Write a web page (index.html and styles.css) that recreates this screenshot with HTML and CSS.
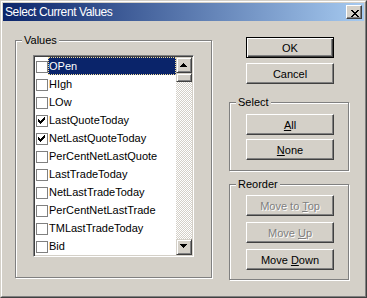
FILE: index.html
```html
<!DOCTYPE html>
<html lang="en">
<head>
    <meta charset="UTF-8">
    <title>Select Current Values</title>
    <link rel="stylesheet" href="styles.css">
</head>
<body>
    <div class="window">
        <div class="frame">
            <div class="titlebar">
                <span class="title">Select Current Values</span>
                <button class="close-btn" type="button">
                    <svg width="8" height="7" viewBox="0 0 8 7" shape-rendering="crispEdges">
                        <path d="M0 0h2v1h-2zM6 0h2v1h-2zM1 1h2v1h-2zM5 1h2v1h-2zM2 2h4v1h-4zM3 3h2v1h-2zM2 4h4v1h-4zM1 5h2v1h-2zM5 5h2v1h-2zM0 6h2v1h-2zM6 6h2v1h-2z" fill="#000"/>
                    </svg>
                </button>
            </div>

            <div class="dialog-body">
                <fieldset class="group values-group">
                    <legend>Values</legend>
                    <div class="listbox">
                        <ul class="items">
                            <li class="item selected"><span class="check"></span><span class="label">OPen</span></li>
                            <li class="item"><span class="check"></span><span class="label">HIgh</span></li>
                            <li class="item"><span class="check"></span><span class="label">LOw</span></li>
                            <li class="item"><span class="check checked"><svg width="10" height="10" viewBox="0 0 10 10" shape-rendering="crispEdges"><path d="M7 1h1v1h-1zM6 2h2v1h-2zM1 3h1v1h-1zM5 3h3v1h-3zM1 4h2v1h-2zM4 4h3v1h-3zM1 5h5v1h-5zM2 6h3v1h-3zM3 7h1v1h-1z" fill="#000"/></svg></span><span class="label">LastQuoteToday</span></li>
                            <li class="item"><span class="check checked"><svg width="10" height="10" viewBox="0 0 10 10" shape-rendering="crispEdges"><path d="M7 1h1v1h-1zM6 2h2v1h-2zM1 3h1v1h-1zM5 3h3v1h-3zM1 4h2v1h-2zM4 4h3v1h-3zM1 5h5v1h-5zM2 6h3v1h-3zM3 7h1v1h-1z" fill="#000"/></svg></span><span class="label">NetLastQuoteToday</span></li>
                            <li class="item"><span class="check"></span><span class="label">PerCentNetLastQuote</span></li>
                            <li class="item"><span class="check"></span><span class="label">LastTradeToday</span></li>
                            <li class="item"><span class="check"></span><span class="label">NetLastTradeToday</span></li>
                            <li class="item"><span class="check"></span><span class="label">PerCentNetLastTrade</span></li>
                            <li class="item"><span class="check"></span><span class="label">TMLastTradeToday</span></li>
                            <li class="item"><span class="check"></span><span class="label">Bid</span></li>
                        </ul>
                        <div class="scrollbar">
                            <div class="sb-btn sb-up">
                                <svg width="7" height="4" viewBox="0 0 7 4" shape-rendering="crispEdges"><path d="M3 0h1v1h-1zM2 1h3v1h-3zM1 2h5v1h-5zM0 3h7v1h-7z" fill="#000"/></svg>
                            </div>
                            <div class="sb-track">
                                <div class="sb-thumb"></div>
                            </div>
                            <div class="sb-btn sb-down">
                                <svg width="7" height="4" viewBox="0 0 7 4" shape-rendering="crispEdges"><path d="M0 0h7v1h-7zM1 1h5v1h-5zM2 2h3v1h-3zM3 3h1v1h-1z" fill="#000"/></svg>
                            </div>
                        </div>
                    </div>
                </fieldset>

                <div class="side">
                    <button class="btn default-btn" type="button">OK</button>
                    <button class="btn cancel-btn" type="button">Cancel</button>

                    <fieldset class="group select-group">
                        <legend>Select</legend>
                        <button class="btn" type="button"><u>A</u>ll</button>
                        <button class="btn gap4" type="button"><u>N</u>one</button>
                    </fieldset>

                    <fieldset class="group reorder-group">
                        <legend>Reorder</legend>
                        <button class="btn disabled" type="button">Move to <u>T</u>op</button>
                        <button class="btn disabled gap6" type="button">Move <u>U</u>p</button>
                        <button class="btn gap6" type="button">Move <u>D</u>own</button>
                    </fieldset>
                </div>
            </div>
        </div>
    </div>
</body>
</html>
```

FILE: styles.css
```css
* {
    box-sizing: border-box;
}
body {
    margin: 0;
    background-color: #d4d0c8;
    font-family: "Liberation Sans", Arial, sans-serif;
    font-size: 11px;
    color: #000;
}
.window {
    width: 367px;
    height: 298px;
    border: 1px solid;
    border-color: #d4d0c8 #404040 #404040 #d4d0c8;
    background-color: #d4d0c8;
}
.frame {
    height: 100%;
    border: 1px solid;
    border-color: #fff #808080 #808080 #fff;
    padding: 1px;
}

/* title bar */
.titlebar {
    height: 18px;
    display: flex;
    align-items: center;
    justify-content: space-between;
    padding: 0 2px;
    background: linear-gradient(to right, #0a246a, #a6caf0);
}
.title {
    color: #fff;
    font-size: 12px;
    letter-spacing: -0.4px;
    white-space: nowrap;
}
.close-btn {
    display: block;
    width: 16px;
    height: 14px;
    margin: 0;
    padding: 3px 0 0 4px;
    background-color: #d4d0c8;
    border: 1px solid;
    border-color: #fff #404040 #404040 #fff;
    box-shadow: inset -1px -1px #808080;
    line-height: 0;
    text-align: left;
}
.close-btn svg {
    display: block;
}

/* layout */
.dialog-body {
    display: flex;
    align-items: flex-start;
    padding-left: 12px;
}
.side {
    width: 120px;
    margin-left: 17px;
    display: flex;
    flex-direction: column;
}

/* group boxes */
.group {
    margin: 0;
    padding: 0;
    min-width: 0;
    border: 1px solid #808080;
    box-shadow: inset 1px 1px #fff, 1px 1px #fff;
}
.group legend {
    margin-left: 6px;
    padding: 0 2px;
    line-height: 13px;
    background-color: #d4d0c8;
}
.values-group {
    width: 197px;
    height: 244px;
    margin-top: 13px;
    padding-top: 8px;
}
.select-group {
    height: 75px;
    margin-top: 12px;
    padding-top: 5px;
}
.reorder-group {
    height: 102px;
    margin-top: 7px;
    padding-top: 4px;
}

/* list with checkboxes */
.listbox {
    display: flex;
    width: 161px;
    height: 202px;
    margin-left: 17px;
    padding: 1px;
    border: 1px solid;
    border-color: #808080 #fff #fff #808080;
    box-shadow: inset 1px 1px #404040, inset -1px -1px #d4d0c8;
    background-color: #fff;
}
.items {
    flex: 1;
    margin: 0;
    padding: 0;
    list-style: none;
    overflow: hidden;
}
.item {
    display: flex;
    align-items: flex-start;
    height: 18px;
    padding-left: 1px;
}
.check {
    flex: none;
    width: 12px;
    height: 12px;
    margin-top: 4px;
    border: 1px solid #808080;
    background-color: #fff;
}
.check svg {
    display: block;
}
.label {
    flex: 1;
    height: 18px;
    line-height: 18px;
    padding-left: 1px;
    white-space: nowrap;
    overflow: hidden;
}
.item.selected .label {
    padding-left: 0;
    line-height: 16px;
    color: #fff;
    background-color: #0a246a;
    border: 1px dotted #f0dc9a;
}

/* scrollbar */
.scrollbar {
    flex: none;
    width: 16px;
    display: flex;
    flex-direction: column;
}
.sb-btn,
.sb-thumb {
    height: 16px;
    border: 1px solid;
    border-color: #d4d0c8 #404040 #404040 #d4d0c8;
    box-shadow: inset 1px 1px #fff, inset -1px -1px #808080;
    background-color: #d4d0c8;
}
.sb-btn svg {
    display: block;
}
.sb-up {
    padding: 5px 0 0 3px;
}
.sb-down {
    padding: 4px 0 0 3px;
}
.sb-track {
    flex: 1;
    background: repeating-conic-gradient(#fff 0 25%, #d4d0c8 0 50%) 0 0 / 2px 2px;
}
.sb-thumb {
    height: 9px;
}

/* push buttons */
.btn {
    display: block;
    width: 88px;
    height: 21px;
    margin: 0 0 0 17px;
    padding: 0;
    font-family: inherit;
    font-size: 11px;
    color: #000;
    background-color: #d4d0c8;
    border: 1px solid;
    border-color: #fff #404040 #404040 #fff;
    box-shadow: inset -1px -1px #808080;
}
.group .btn {
    margin-left: 16px;
}
.default-btn {
    margin-top: 16px;
    border-color: #000;
    box-shadow: inset 1px 1px #fff, inset -1px -1px #404040, inset -2px -2px #808080;
}
.cancel-btn {
    margin-top: 5px;
}
.group .gap4 {
    margin-top: 4px;
}
.group .gap6 {
    margin-top: 6px;
}
.btn.disabled {
    color: #808080;
    text-shadow: 1px 1px 0 #fff;
}
```
